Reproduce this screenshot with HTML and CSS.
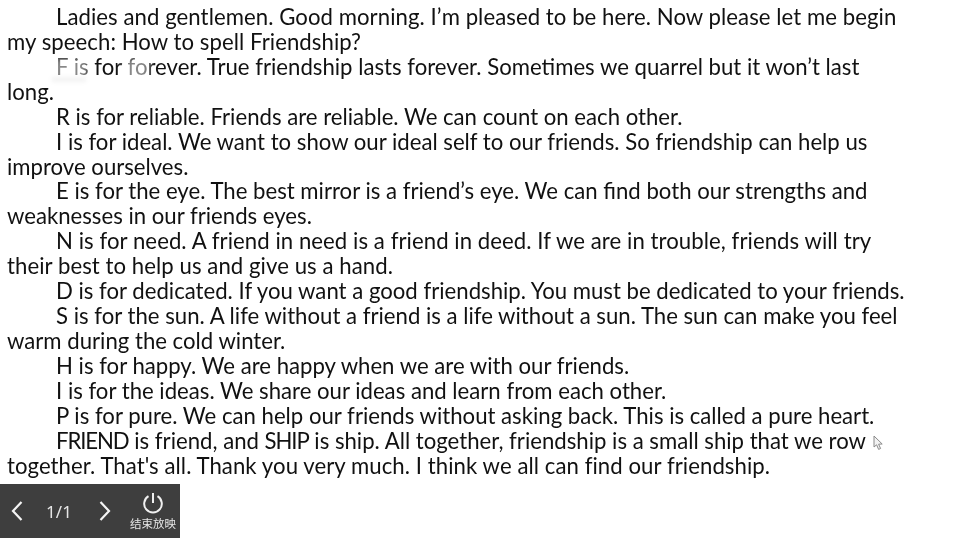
FILE: index.html
```html
<!DOCTYPE html>
<html lang="en">
<head>
    <meta charset="UTF-8">
    <meta name="viewport" content="width=device-width, initial-scale=1.0">
    <title>How to spell Friendship</title>
    <link rel="stylesheet" href="styles.css">
</head>
<body>

<div class="slide">
    <div class="speech">
        <p class="wide">Ladies and gentlemen. Good morning. I’m pleased to be here. Now please let me begin my speech: How to spell Friendship?</p>
        <p>F is for forever. True friendship lasts forever. Sometimes we quarrel but it won’t last long.</p>
        <p>R is for reliable. Friends are reliable. We can count on each other.</p>
        <p>I is for ideal. We want to show our ideal self to our friends. So friendship can help us improve ourselves.</p>
        <p>E is for the eye. The best mirror is a friend’s eye. We can find both our strengths and weaknesses in our friends eyes.</p>
        <p class="wide">N is for need. A friend in need is a friend in deed. If we are in trouble, friends will try their best to help us and give us a hand.</p>
        <p>D is for dedicated. If you want a good friendship. You must be dedicated to your friends.</p>
        <p>S is for the sun. A life without a friend is a life without a sun. The sun can make you feel warm during the cold winter.</p>
        <p>H is for happy. We are happy when we are with our friends.</p>
        <p>I is for the ideas. We share our ideas and learn from each other.</p>
        <p>P is for pure. We can help our friends without asking back. This is called a pure heart.</p>
        <p><span class="caps">FRIEND</span> is friend, and <span class="caps">SHIP</span> is ship. All together, friendship is a small ship that we row <span class="wide">together. That's all. Thank you very much. I think we all can find our friendship.</span></p>
    </div>

    <!-- smudges left over the F line -->
    <div class="smudge smudge-left"></div>
    <div class="smudge smudge-right"></div>
    <div class="ghost"></div>

    <svg class="cursor" width="11" height="16" viewBox="0 0 11 16">
        <path d="M1 1 L1 12 L3.6 9.8 L5.6 14.4 L7.6 13.5 L5.6 9.2 L9.2 9 Z" fill="#f2f2f2" stroke="#8a8a8a" stroke-width="1"/>
    </svg>

    <div class="player">
        <svg class="arrow" width="14" height="22" viewBox="0 0 14 22">
            <path d="M11.5 2 L3 11 L11.5 20" fill="none" stroke="#f4f4f4" stroke-width="2.2"/>
        </svg>
        <span class="page">1/1</span>
        <svg class="arrow" width="14" height="22" viewBox="0 0 14 22">
            <path d="M2.5 2 L11 11 L2.5 20" fill="none" stroke="#f4f4f4" stroke-width="2.2"/>
        </svg>
        <div class="stop">
            <svg width="22" height="22" viewBox="0 0 22 22">
                <path d="M6.5 4.2 A8.8 8.8 0 1 0 15.5 4.2" fill="none" stroke="#f0f0f0" stroke-width="2"/>
                <path d="M11 1 V11" fill="none" stroke="#f0f0f0" stroke-width="2"/>
            </svg>
            <span>结束放映</span>
        </div>
    </div>
</div>

</body>
</html>
```

FILE: styles.css
```css
html, body {
    margin: 0;
    background: #fff;
}
.slide {
    position: relative;
    width: 960px;
    height: 540px;
    overflow: hidden;
    background: #fff;
}
.speech {
    width: 899px;
    padding: 5px 0 0 7px;
    font-family: 'Lato', 'Liberation Sans', sans-serif;
    font-size: 22.16px;
    line-height: 24.92px;
    color: #111;
    filter: blur(0.3px);
}
.speech p {
    margin: 0;
    text-indent: 49px;
}
.speech .wide {
    letter-spacing: 0.06px;
}
.speech .caps {
    letter-spacing: -1.1px;
}
.smudge {
    position: absolute;
    top: 58px;
    height: 26px;
    background: rgba(255, 255, 255, 0.5);
    filter: blur(3px);
}
.smudge-left {
    left: 50px;
    width: 38px;
}
.smudge-right {
    left: 122px;
    width: 28px;
}
.ghost {
    position: absolute;
    left: 52px;
    top: 77px;
    width: 34px;
    height: 5px;
    background: rgba(0, 0, 0, 0.05);
    filter: blur(2px);
}
.cursor {
    position: absolute;
    left: 873px;
    top: 435px;
}
.player {
    position: absolute;
    left: 0;
    top: 484px;
    width: 180px;
    height: 54px;
    background: #3e3e3e;
    display: flex;
    align-items: center;
    color: #e6e6e6;
    font-family: 'Noto Sans', sans-serif;
    filter: blur(0.3px);
}
.arrow {
    margin-left: 10px;
}
.page {
    width: 66px;
    margin-left: 2px;
    text-align: center;
    font-size: 17px;
}
.player .arrow + .page + .arrow {
    margin-left: 6px;
}
.stop {
    margin-left: 18px;
    display: flex;
    flex-direction: column;
    align-items: center;
    gap: 2px;
}
.stop svg {
    display: block;
}
.stop span {
    font-family: 'Noto Sans CJK SC', sans-serif;
    font-size: 11.5px;
    line-height: 14px;
}
```
